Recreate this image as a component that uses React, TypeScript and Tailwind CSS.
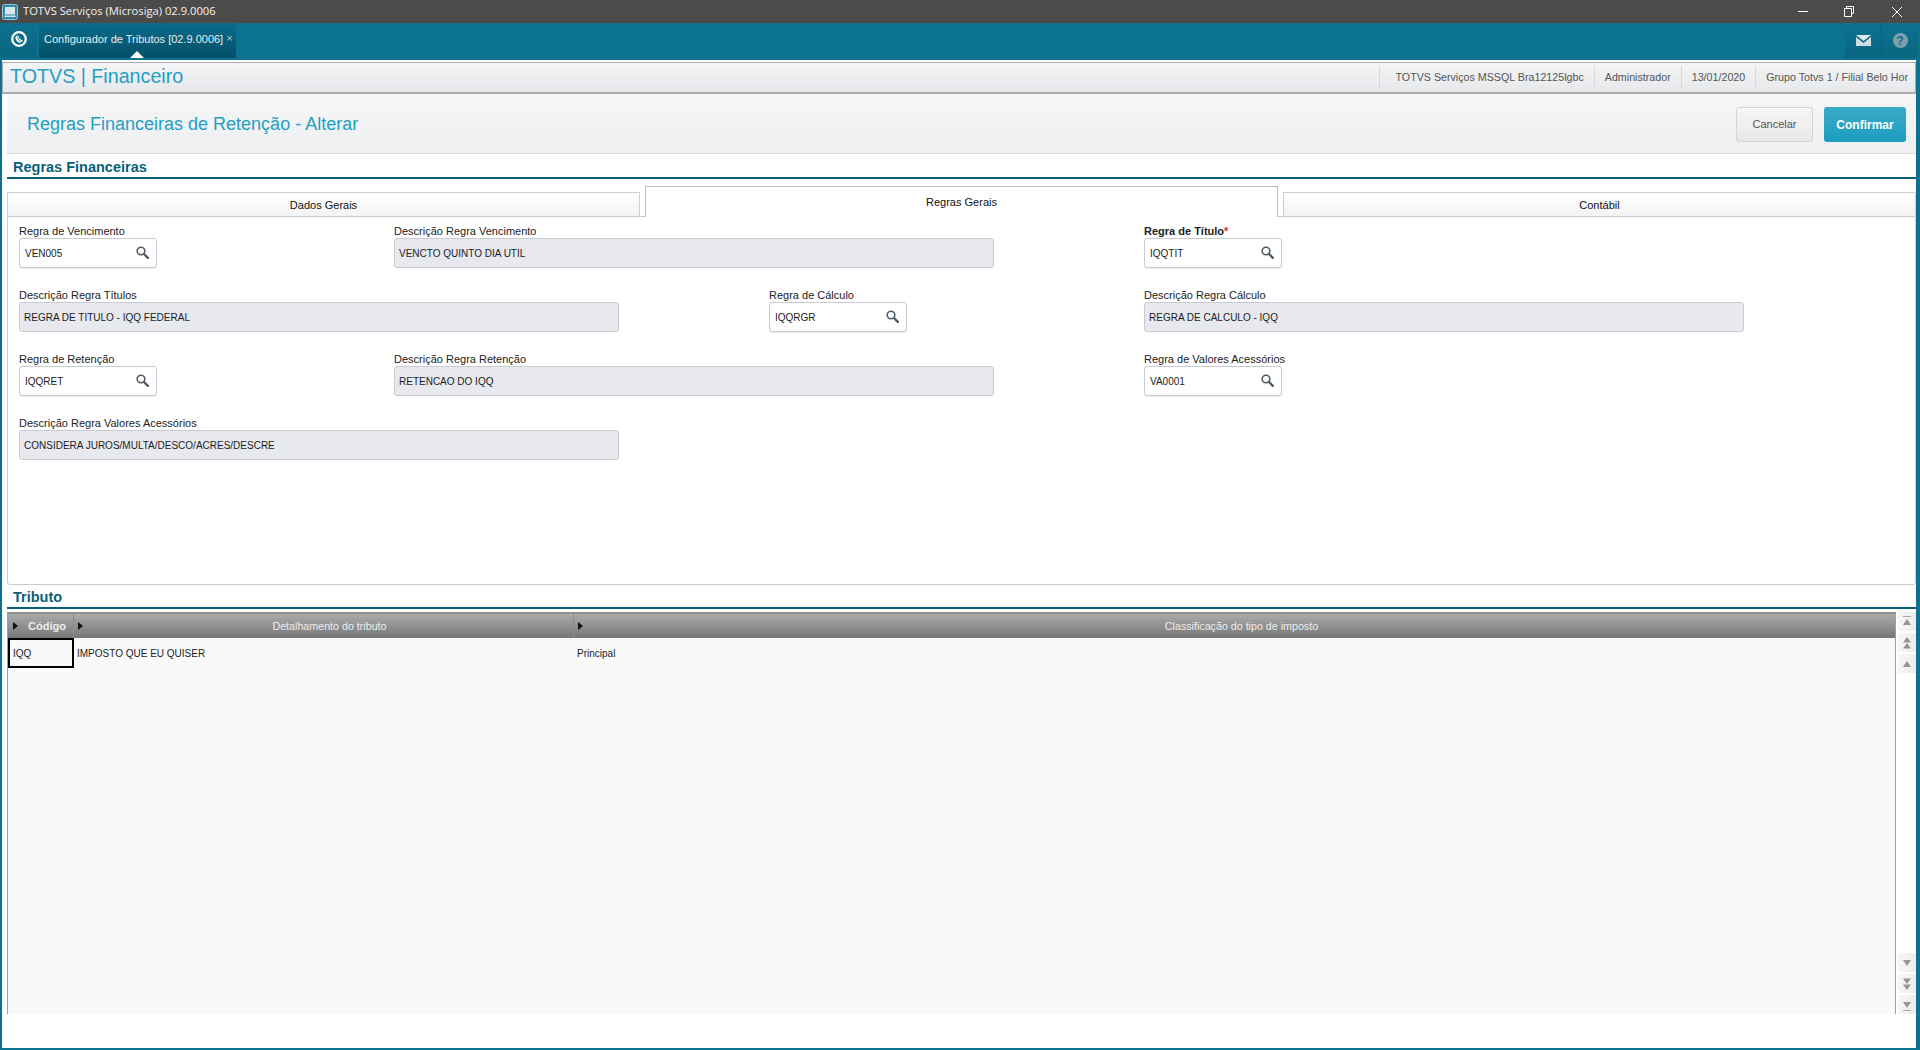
import React from 'react';

const sans = "font-['Liberation_Sans',Arial,sans-serif]";

const SearchIcon = () => (
  <svg width="13" height="13" viewBox="0 0 13 13" className="-mt-px shrink-0">
    <circle cx="5" cy="5" r="3.8" fill="none" stroke="#4f5c66" strokeWidth="1.6" />
    <path d="M8 8l3.8 3.8" stroke="#4f5c66" strokeWidth="2.4" strokeLinecap="round" />
  </svg>
);

const Lookup = ({ label, value, required }: { label: string; value: string; required?: boolean }) => (
  <div className="h-[64px]">
    <div className={`h-[15px] text-[11px] leading-[16px] text-[#222] ${required ? 'font-bold' : ''}`}>
      {label}
      {required && <span className="text-[#e0281e]">*</span>}
    </div>
    <div className="flex h-[30px] w-[138px] items-center justify-between rounded-[3px] border border-[#c8ccd0] bg-white pl-[5px] pr-[7px] shadow-[0_1px_1px_rgba(0,0,0,0.08)]">
      <span className="text-[10px] text-[#1c1c1c]">{value}</span>
      <SearchIcon />
    </div>
  </div>
);

const Desc = ({ label, value, className }: { label: string; value: string; className?: string }) => (
  <div className={`h-[64px] ${className ?? ''}`}>
    <div className="h-[15px] text-[11px] leading-[16px] text-[#222]">{label}</div>
    <div className="flex h-[30px] w-[600px] items-center rounded-[3px] border border-[#c8ccd0] bg-[#e7e9ef] pl-[4px]">
      <span className="text-[10px] text-[#1c1c1c]">{value}</span>
    </div>
  </div>
);

const Tab = ({ label, active }: { label: string; active?: boolean }) => (
  <div
    className={
      active
        ? 'relative z-10 -mb-px flex h-[31px] flex-1 items-center justify-center border border-b-0 border-[#bdbdbd] bg-white text-[11px] text-[#111]'
        : 'flex h-[24px] flex-1 items-center justify-center border border-b-0 border-[#cfcfcf] bg-gradient-to-b from-white to-[#f3f3f3] pt-[2px] text-[11px] text-[#111]'
    }
  >
    {label}
  </div>
);

const HeaderArrow = () => (
  <svg width="5" height="8" viewBox="0 0 5 8" className="shrink-0">
    <path d="M0 0l5 4-5 4z" fill="#111" />
  </svg>
);

const ScrollBtn = ({ kind, flip, className }: { kind: 'edge' | 'double' | 'single'; flip?: boolean; className?: string }) => (
  <div className={`flex h-[19px] w-[18px] items-center justify-center bg-gradient-to-r from-[#f7f7f7] to-[#ececee] ${className ?? ''}`}>
    <svg width="10" height="14" viewBox="0 0 10 14" className={flip ? 'rotate-180' : ''}>
      {kind === 'edge' && (
        <>
          <rect x="1" y="1" width="8" height="1" fill="#a5a5a5" />
          <path d="M5 4l4 6H1z" fill="#959595" />
        </>
      )}
      {kind === 'double' && (
        <>
          <path d="M5 1l4 5.5H1z" fill="#959595" />
          <path d="M5 7l4 5.5H1z" fill="#959595" />
        </>
      )}
      {kind === 'single' && <path d="M5 4l4 6H1z" fill="#959595" />}
    </svg>
  </div>
);

const SectionTitle = ({ children, className }: { children: React.ReactNode; className?: string }) => (
  <div className={`border-b-2 border-[#0a6079] pl-[6px] text-[14.5px] font-bold text-[#0a6079] ${className ?? ''}`}>{children}</div>
);

export default function App() {
  return (
    <div className={`flex h-[1050px] w-[1920px] flex-col overflow-hidden bg-white ${sans}`}>
      {/* title bar */}
      <div className="flex h-[23px] shrink-0 items-center bg-[#4d4b49] pl-[2px] text-white">
        <svg width="16" height="16" viewBox="0 0 16 16">
          <rect x="0.5" y="0.5" width="15" height="15" rx="2" fill="#2f88a6" stroke="#8cc6d8" />
          <rect x="3" y="3" width="10" height="7.5" fill="#d8e6ec" />
          <rect x="2.5" y="11.5" width="11" height="1.5" fill="#d8e6ec" />
        </svg>
        <span className="ml-[5px] font-['Open_Sans',sans-serif] text-[11.2px] text-[#f2f2f2]">TOTVS Serviços (Microsiga) 02.9.0006</span>
        <div className="ml-auto flex items-center">
          <div className="flex w-[46px] justify-center">
            <div className="h-px w-[10px] bg-white" />
          </div>
          <div className="mr-[2px] flex w-[46px] justify-center">
            <svg width="10" height="11" viewBox="0 0 10 11">
              <path d="M2.5 2.5V.5h7v7h-2M.5 2.5h7v8h-7z" fill="none" stroke="#fff" />
            </svg>
          </div>
          <div className="flex w-[46px] justify-center">
            <svg width="12" height="12" viewBox="0 0 12 12">
              <path d="M1 1l10 10M11 1L1 11" stroke="#fff" strokeWidth="1" />
            </svg>
          </div>
        </div>
      </div>

      {/* menu bar */}
      <div className="flex h-[37px] shrink-0 bg-[#0b7290]">
        <div className="flex h-[35px] w-[37px] items-center justify-center bg-gradient-to-b from-[#0b7290] to-[#0a6681] pb-[3px]">
          <svg width="16" height="16" viewBox="0 0 16 16">
            <circle cx="8" cy="8" r="6.8" fill="none" stroke="#fff" strokeWidth="2.3" />
            <path d="M4.6 6.6C4.8 4.6 8 4.4 8 7s3.2 2.6 3.4 2.2M4.6 6.6C5 8 6 11 8 11.2s3-.8 3.4-2" fill="#fff" stroke="#fff" strokeWidth="0.8" />
            <path d="M6 6.2c1 0 1 .6 1.2 1.6S8 10 9.6 9.8" fill="none" stroke="#0b7290" strokeWidth="1" />
          </svg>
        </div>
        <div className="relative ml-[2px] flex h-[35px] w-[197px] items-center bg-gradient-to-b from-[#0a6d8a] to-[#044f68] pl-[5px]">
          <span className="-mt-[3px] whitespace-nowrap text-[11px] text-[#e8eef1]">Configurador de Tributos [02.9.0006]</span>
          <span className="-mt-[5px] ml-[3px] text-[11px] leading-none text-[#b9ccd4]">×</span>
          <div className="absolute bottom-0 left-[91px] h-0 w-0 border-x-[7px] border-b-[7px] border-x-transparent border-b-white" />
        </div>
        <div className="ml-auto flex">
          <div className="flex h-[35px] w-[36px] items-center justify-center bg-gradient-to-b from-[#0b7290] to-[#0a6681]">
            <svg width="15" height="11" viewBox="0 0 15 11">
              <path d="M0 0h15L7.5 6z" fill="#dfe8ec" />
              <path d="M0 2v9h15V2L7.5 8z" fill="#cfdee5" />
            </svg>
          </div>
          <div className="mr-[2px] flex h-[35px] w-[37px] items-center justify-center border-l border-[#0a5f78] bg-gradient-to-b from-[#0b7290] to-[#0a6681]">
            <div className="flex h-[15px] w-[15px] items-center justify-center rounded-full bg-[#7f9fae] text-[12px] font-bold leading-none text-[#0b6e8b]">?</div>
          </div>
        </div>
      </div>

      {/* body inside the teal frame */}
      <div className="flex min-h-0 flex-1 flex-col border-b-2 border-l-2 border-r-4 border-[#0b7290] bg-white">
        {/* module header */}
        <div className="mt-[2px] flex h-[32px] shrink-0 items-center border border-b-2 border-[#a9abad] bg-gradient-to-b from-[#f4f5f6] to-[#e6e8eb] pl-[7px]">
          <span className="-mt-px text-[19.7px] text-[#1f9fc4]">TOTVS | Financeiro</span>
          <div className="ml-auto flex h-[24px] items-center text-[10.7px] text-[#555]">
            <div className="flex h-full items-center border-l border-[#d5d7da] pl-[15px] pr-[10px]">TOTVS Serviços MSSQL Bra12125lgbc</div>
            <div className="flex h-full items-center border-l border-[#d5d7da] px-[10px]">Administrador</div>
            <div className="flex h-full items-center border-l border-[#d5d7da] px-[10px]">13/01/2020</div>
            <div className="flex h-full items-center border-l border-[#d5d7da] pl-[10px] pr-[7px]">Grupo Totvs 1 / Filial Belo Hor</div>
          </div>
        </div>

        {/* page title */}
        <div className="ml-[5px] flex h-[60px] shrink-0 items-center justify-between border-b border-[#dcdcdc] bg-gradient-to-b from-[#f5f6f5] to-[#eeeff1] pl-[20px] pr-[10px] pt-[2px]">
          <span className="text-[18px] text-[#1f9fc4]">Regras Financeiras de Retenção - Alterar</span>
          <div className="flex gap-[11px]">
            <div className="flex h-[35px] w-[77px] items-center justify-center rounded-[3px] border border-[#d2d4d6] bg-gradient-to-b from-[#f6f6f6] to-[#e8e8e8] text-[11px] text-[#555]">Cancelar</div>
            <div className="flex h-[35px] w-[82px] items-center justify-center rounded-[3px] bg-gradient-to-b from-[#3aabc9] to-[#1a9cc0] text-[12px] font-bold text-white">Confirmar</div>
          </div>
        </div>

        <SectionTitle className="ml-[5px] mt-[5px] h-[20px] leading-[17px]">Regras Financeiras</SectionTitle>

        {/* tabs */}
        <div className="ml-[5px] mt-[7px] flex h-[30px] shrink-0 items-end gap-[5px]">
          <Tab label="Dados Gerais" />
          <Tab label="Regras Gerais" active />
          <Tab label="Contábil" />
        </div>
        <div className="ml-[5px] h-[369px] shrink-0 rounded-b-[3px] border border-[#cbcbcb] pl-[11px] pt-[6px]">
          <div className="grid grid-cols-[375px_375px_375px_375px]">
            <Lookup label="Regra de Vencimento" value="VEN005" />
            <Desc label="Descrição Regra Vencimento" value="VENCTO QUINTO DIA UTIL" className="col-span-2" />
            <Lookup label="Regra de Título" value="IQQTIT" required />
            <Desc label="Descrição Regra Títulos" value="REGRA DE TITULO - IQQ FEDERAL" className="col-span-2" />
            <Lookup label="Regra de Cálculo" value="IQQRGR" />
            <Desc label="Descrição Regra Cálculo" value="REGRA DE CALCULO - IQQ" />
            <Lookup label="Regra de Retenção" value="IQQRET" />
            <Desc label="Descrição Regra Retenção" value="RETENCAO DO IQQ" className="col-span-2" />
            <Lookup label="Regra de Valores Acessórios" value="VA0001" />
            <Desc label="Descrição Regra Valores Acessórios" value="CONSIDERA JUROS/MULTA/DESCO/ACRES/DESCRE" className="col-span-2" />
          </div>
        </div>

        <SectionTitle className="ml-[5px] mt-[3px] h-[21px] leading-[18px]">Tributo</SectionTitle>

        {/* grid */}
        <div className="ml-[5px] mt-[3px] flex h-[402px] shrink-0">
          <div className="flex min-w-0 flex-1 flex-col border-l border-r border-t-2 border-l-[#a0a0a0] border-r-[#a0a0a0] border-t-[#8f8f8f] bg-[#f9f9f9]">
            <div className="flex h-[24px] shrink-0 bg-gradient-to-b from-[#ababab] to-[#777] text-[10.7px] text-[#eee]">
              <div className="flex w-[66px] items-center border-r border-[#8a8a8a] pl-[5px]">
                <HeaderArrow />
                <span className="ml-[10px] text-[11px] font-bold">Código</span>
              </div>
              <div className="relative flex w-[500px] items-center justify-center border-r border-[#8a8a8a] pl-[12px]">
                <span className="absolute left-[4px] top-[8px]"><HeaderArrow /></span>
                Detalhamento do tributo
              </div>
              <div className="relative flex flex-1 items-center justify-center pl-[14px]">
                <span className="absolute left-[4px] top-[8px]"><HeaderArrow /></span>
                Classificação do tipo de imposto
              </div>
            </div>
            <div className="flex h-[30px] shrink-0 items-center text-[10px] text-[#1c1c1c]">
              <div className="flex h-full w-[66px] items-center border-2 border-black pl-[3px]">IQQ</div>
              <div className="w-[500px] pl-[3px]">IMPOSTO QUE EU QUISER</div>
              <div className="pl-[3px]">Principal</div>
            </div>
          </div>
          <div className="flex w-[20px] shrink-0 flex-col items-end">
            <ScrollBtn kind="edge" />
            <ScrollBtn kind="double" className="mt-[2px]" />
            <ScrollBtn kind="single" className="mt-[2px]" />
            <ScrollBtn kind="single" flip className="mt-auto rounded-tl-[4px]" />
            <ScrollBtn kind="double" flip className="mt-[2px]" />
            <ScrollBtn kind="edge" flip className="mt-[2px]" />
          </div>
        </div>
      </div>
    </div>
  );
}
